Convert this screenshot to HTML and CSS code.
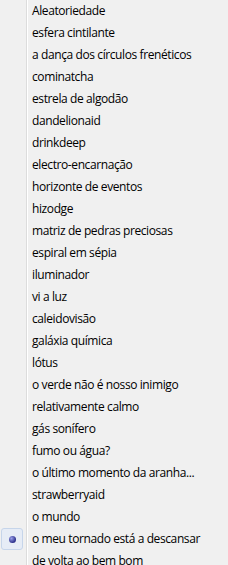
FILE: index.html
```html
<!DOCTYPE html>
<html lang="pt">
<head>
  <meta charset="UTF-8">
  <title>Menu</title>
  <link rel="stylesheet" href="styles.css">
</head>
<body>
  <ul class="menu">
    <li class="item"><span class="check"></span><span class="label">Aleatoriedade</span></li>
    <li class="item"><span class="check"></span><span class="label">esfera cintilante</span></li>
    <li class="item"><span class="check"></span><span class="label">a dança dos círculos frenéticos</span></li>
    <li class="item"><span class="check"></span><span class="label">cominatcha</span></li>
    <li class="item"><span class="check"></span><span class="label">estrela de algodão</span></li>
    <li class="item"><span class="check"></span><span class="label">dandelionaid</span></li>
    <li class="item"><span class="check"></span><span class="label">drinkdeep</span></li>
    <li class="item"><span class="check"></span><span class="label">electro-encarnação</span></li>
    <li class="item"><span class="check"></span><span class="label">horizonte de eventos</span></li>
    <li class="item"><span class="check"></span><span class="label">hizodge</span></li>
    <li class="item"><span class="check"></span><span class="label">matriz de pedras preciosas</span></li>
    <li class="item"><span class="check"></span><span class="label">espiral em sépia</span></li>
    <li class="item"><span class="check"></span><span class="label">iluminador</span></li>
    <li class="item"><span class="check"></span><span class="label">vi a luz</span></li>
    <li class="item"><span class="check"></span><span class="label">caleidovisão</span></li>
    <li class="item"><span class="check"></span><span class="label">galáxia química</span></li>
    <li class="item"><span class="check"></span><span class="label">lótus</span></li>
    <li class="item"><span class="check"></span><span class="label">o verde não é nosso inimigo</span></li>
    <li class="item"><span class="check"></span><span class="label">relativamente calmo</span></li>
    <li class="item"><span class="check"></span><span class="label">gás sonífero</span></li>
    <li class="item"><span class="check"></span><span class="label">fumo ou água?</span></li>
    <li class="item"><span class="check"></span><span class="label">o último momento da aranha...</span></li>
    <li class="item"><span class="check"></span><span class="label">strawberryaid</span></li>
    <li class="item"><span class="check"></span><span class="label">o mundo</span></li>
    <li class="item selected"><span class="check"><span class="radio"><span class="dot"></span></span></span><span class="label">o meu tornado está a descansar</span></li>
    <li class="item"><span class="check"></span><span class="label">de volta ao bem bom</span></li>
  </ul>
</body>
</html>
```

FILE: styles.css
```css
* {
  margin: 0;
  padding: 0;
  box-sizing: border-box;
}
body {
  background: #f0f0f0;
  color: #000;
  font-family: "Open Sans", "Noto Sans", sans-serif;
  font-size: 12px;
  letter-spacing: -0.4px;
  overflow: hidden;
}
.menu {
  list-style: none;
}
.item {
  display: flex;
  height: 22px;
}
.check {
  width: 26px;
  flex: none;
  padding-left: 1px;
}
.label {
  flex: 1;
  border-left: 1px solid #dcdcdc;
  box-shadow: inset 1px 0 #fff;
  padding-left: 5px;
  line-height: 22px;
  white-space: nowrap;
}
.radio {
  width: 22px;
  height: 22px;
  border: 1px solid #c6d5ea;
  border-radius: 3px;
  background: #e6ecf6;
  display: flex;
  align-items: center;
  justify-content: center;
}
.dot {
  width: 7px;
  height: 7px;
  border-radius: 50%;
  background: radial-gradient(circle at 35% 35%, #9aa0ea, #2a2e8a 70%);
}
```
